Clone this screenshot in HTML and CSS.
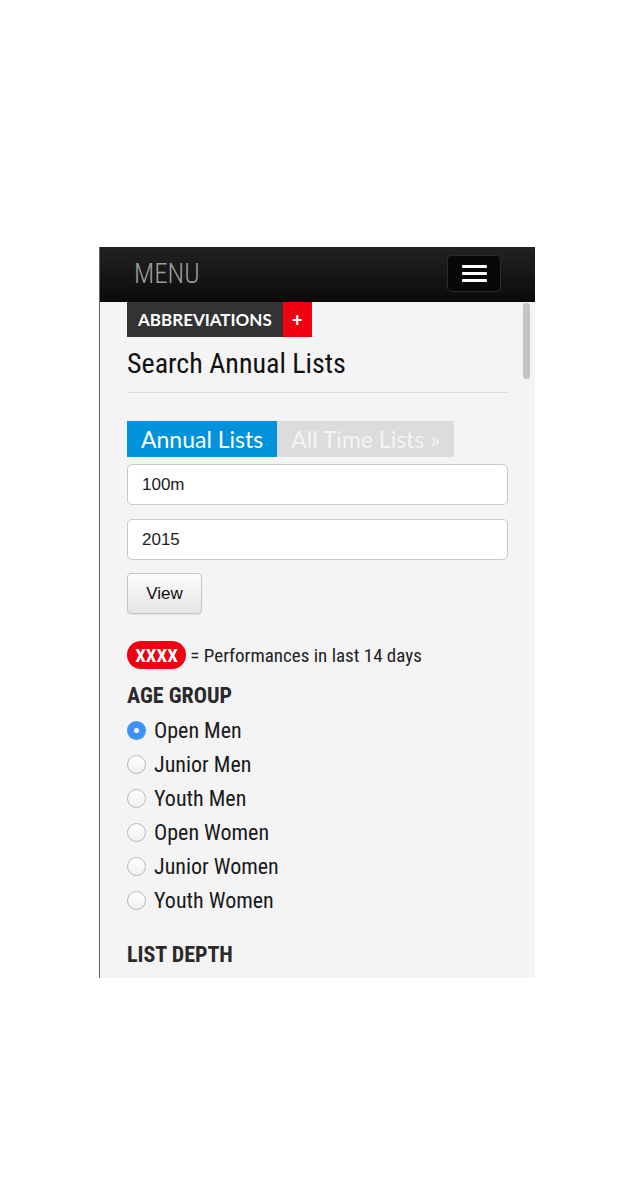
FILE: index.html
```html
<!DOCTYPE html>
<html>
<head>
<meta charset="utf-8">
<link rel="stylesheet" href="styles.css">
</head>
<body>
<div class="device">
  <div class="navbar">
    <span class="brand">MENU</span>
    <button class="toggle" aria-label="menu"><span></span><span></span><span></span></button>
  </div>
  <div class="scrollbar"></div>
  <div class="content">
    <div class="abbr"><span class="abbr-label">ABBREVIATIONS</span><span class="abbr-plus">+</span></div>
    <h1 class="title">Search Annual Lists</h1>
    <div class="rule"></div>
    <div class="tabs">
      <span class="tab active">Annual Lists</span>
      <span class="tab">All Time Lists »</span>
    </div>
    <div class="field">100m</div>
    <div class="field">2015</div>
    <button class="btn">View</button>
    <div class="legend"><span class="pill">XXXX</span> = Performances in last 14 days</div>
    <h2 class="section">AGE GROUP</h2>
    <ul class="radios">
      <li><span class="radio checked"></span>Open Men</li>
      <li><span class="radio"></span>Junior Men</li>
      <li><span class="radio"></span>Youth Men</li>
      <li><span class="radio"></span>Open Women</li>
      <li><span class="radio"></span>Junior Women</li>
      <li><span class="radio"></span>Youth Women</li>
    </ul>
    <h2 class="section depth">LIST DEPTH</h2>
    <ul class="radios">
      <li><span class="radio"></span>Top 10</li>
    </ul>
  </div>
</div>
</body>
</html>
```
FILE: styles.css
```css
html, body {
  margin: 0;
  padding: 0;
  background: #fff;
}
.device {
  position: relative;
  margin: 247px 0 0 99px;
  width: 435px;
  height: 731px;
  border-left: 1px solid #666;
  background: #f4f4f4;
  overflow: hidden;
}
.navbar {
  height: 54px;
  display: flex;
  align-items: center;
  justify-content: space-between;
  padding: 0 34px 0 34px;
  background: linear-gradient(#222, #0b0b0b);
  border-bottom: 1px solid #080808;
}
.brand {
  font-family: Roboto, sans-serif;
  font-stretch: 75%;
  font-weight: 300;
  font-size: 27px;
  color: #9d9d9d;
}
.toggle {
  width: 54px;
  height: 37px;
  margin-top: -2px;
  background: #080808;
  border: 1px solid #2a2a2a;
  border-radius: 4px;
  display: flex;
  flex-direction: column;
  align-items: center;
  justify-content: center;
  gap: 4px;
  padding: 0;
}
.toggle span {
  display: block;
  width: 25px;
  height: 3px;
  background: #fff;
  border-radius: 1px;
}
.scrollbar {
  position: absolute;
  right: 5px;
  top: 56px;
  width: 7px;
  height: 76px;
  border-radius: 4px;
  background: #c4c4c4;
}
.content {
  padding: 0 27px;
}
.abbr {
  display: flex;
  height: 35px;
  width: max-content;
}
.abbr-label {
  display: flex;
  align-items: center;
  padding: 0 11px 0 11px;
  background: #333;
  color: #fff;
  font-family: Lato, sans-serif;
  font-weight: 700;
  font-size: 17px;
}
.abbr-plus {
  display: flex;
  align-items: center;
  justify-content: center;
  width: 29px;
  background: #f00010;
  color: #fff;
  font-family: Lato, sans-serif;
  font-weight: 900;
  font-size: 18px;
}
.title {
  margin: 8px 0 0;
  font-family: Roboto, sans-serif;
  font-stretch: 75%;
  font-weight: 400;
  font-size: 28px;
  line-height: 38px;
  color: #111;
}
.rule {
  height: 1px;
  background: #ddd;
  margin-top: 9px;
}
.tabs {
  display: flex;
  margin-top: 28px;
  height: 36px;
}
.tab {
  display: flex;
  align-items: center;
  padding: 0 14px;
  font-family: Lato, sans-serif;
  font-size: 23px;
  color: #f4f4f4;
  background: #dcdcdc;
}
.tab.active {
  background: #0092da;
  color: #fff;
}
.field {
  box-sizing: border-box;
  height: 41px;
  margin-top: 7px;
  padding: 0 14px;
  display: flex;
  align-items: center;
  background: #fff;
  border: 1px solid #c8c8c8;
  border-radius: 5px;
  font-family: "Liberation Sans", Arial, sans-serif;
  font-size: 17px;
  color: #222;
}
.field + .field {
  margin-top: 14px;
}
.btn {
  display: block;
  box-sizing: border-box;
  margin-top: 13px;
  width: 75px;
  height: 41px;
  border: 1px solid #c4c4c4;
  border-radius: 4px;
  background: linear-gradient(#fdfdfd, #e4e4e4);
  box-shadow: 0 1px 1px rgba(0,0,0,0.08);
  font-family: "Liberation Sans", Arial, sans-serif;
  font-size: 17px;
  color: #111;
  padding: 0;
}
.legend {
  margin-top: 27px;
  display: flex;
  align-items: center;
  font-family: Roboto, sans-serif;
  font-stretch: 75%;
  font-size: 19px;
  color: #222;
  white-space: pre;
}
.pill {
  display: inline-flex;
  align-items: center;
  justify-content: center;
  width: 59px;
  height: 28px;
  border-radius: 14px;
  background: #f00012;
  color: #fff;
  font-weight: 700;
  font-size: 19px;
}
.section {
  margin: 14px 0 0;
  font-family: Roboto, sans-serif;
  font-stretch: 75%;
  font-weight: 700;
  font-size: 22px;
  line-height: 26px;
  color: #2a2a2a;
}
.section.depth {
  margin-top: 25px;
}
.radios {
  list-style: none;
  margin: 4px 0 0;
  padding: 0;
}
.radios li {
  display: flex;
  align-items: center;
  height: 34px;
  font-family: Roboto, sans-serif;
  font-stretch: 75%;
  font-size: 22px;
  color: #1a1a1a;
}
.radio {
  box-sizing: border-box;
  width: 19px;
  height: 19px;
  margin-right: 8px;
  border-radius: 50%;
  border: 1px solid #b9b9b9;
  background: linear-gradient(#fff, #f0f0f0);
  flex: none;
}
.radio.checked {
  border: none;
  background: #3a93f5;
  position: relative;
}
.radio.checked::after {
  content: "";
  position: absolute;
  left: 7px;
  top: 7px;
  width: 5px;
  height: 5px;
  border-radius: 50%;
  background: #fff;
}
```
